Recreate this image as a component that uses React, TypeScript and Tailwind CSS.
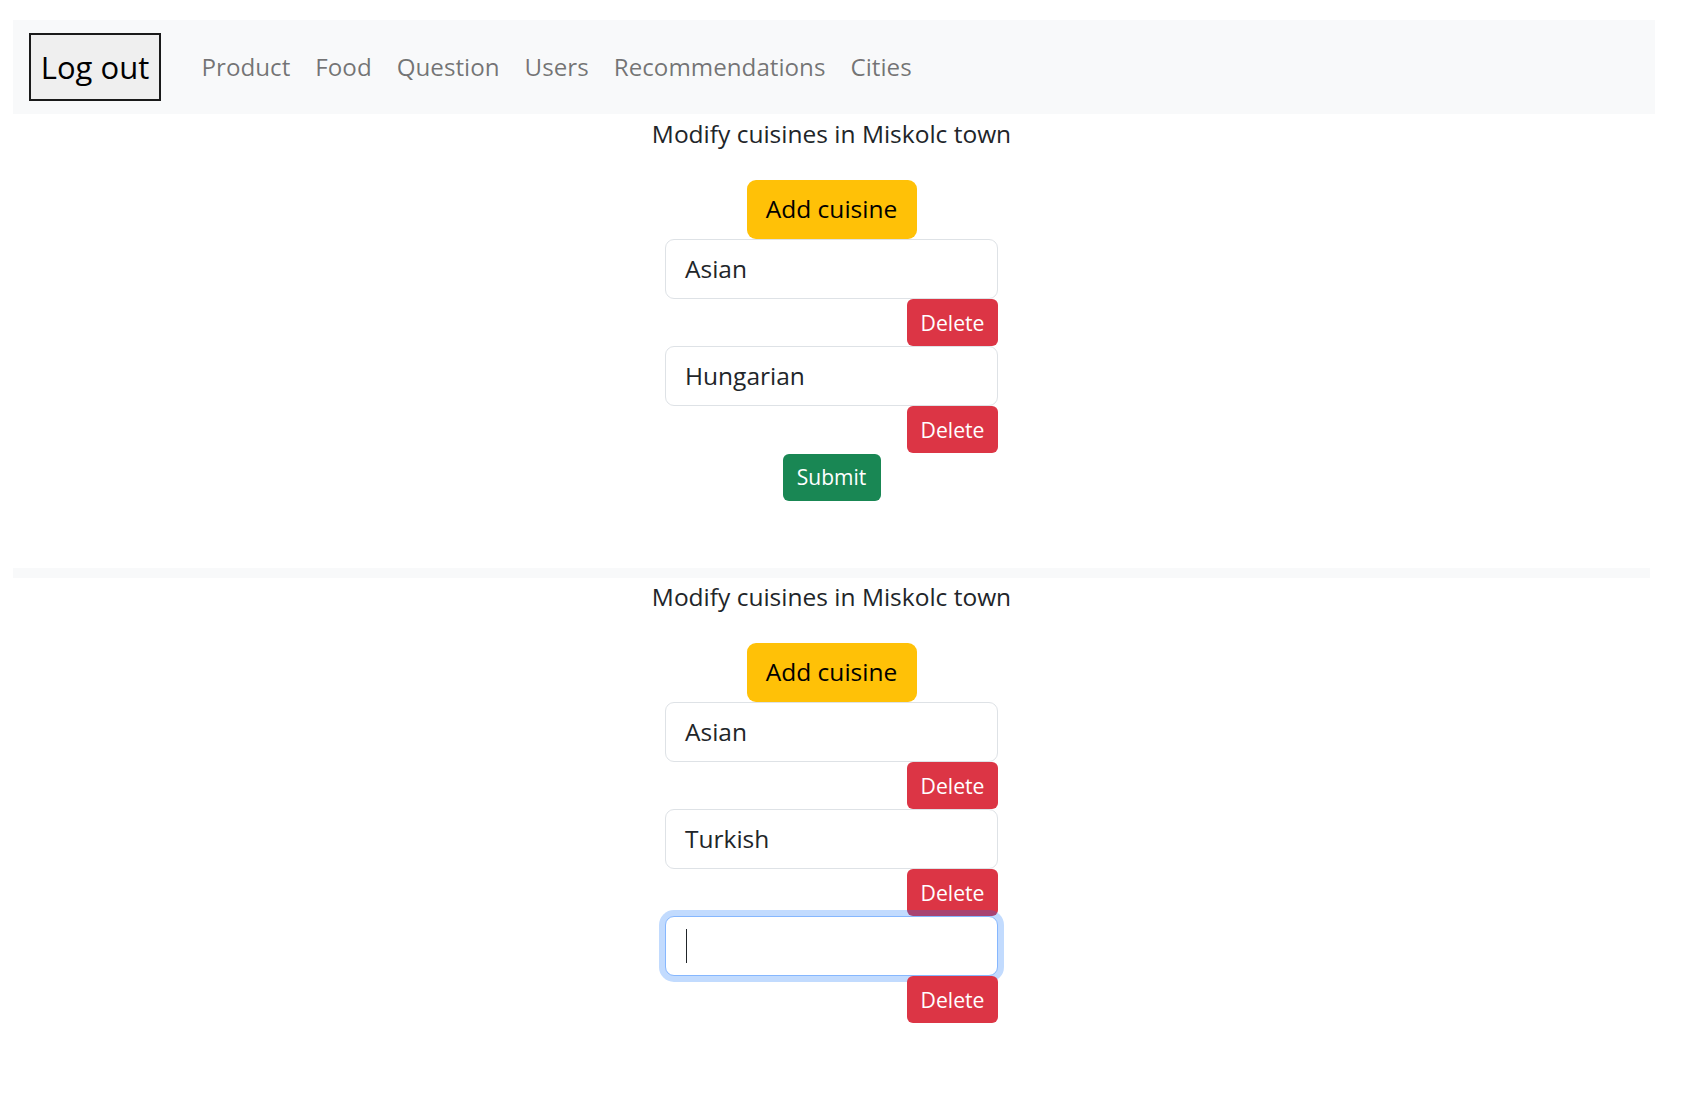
import React from "react";

const font = { fontFamily: "'Segoe UI', 'Open Sans', 'Noto Sans', sans-serif" };

function Item({ value, focused }: { value: string; focused?: boolean }) {
  return (
    <>
      {focused ? (
        <div className="w-full h-[60px] rounded-[9px] border border-[#86b7fe] bg-white shadow-[0_0_0_6px_rgba(13,110,253,0.25)] flex items-center pl-[20px]">
          <div className="w-[1px] h-[34px] bg-[#212529]" />
        </div>
      ) : (
        <div className="w-full h-[60px] rounded-[9px] border border-[#dee2e6] bg-white flex items-center pl-[19px] text-[24.5px] text-[#212529]">
          {value}
        </div>
      )}
      <button className="self-end w-[91px] h-[47px] rounded-[6px] bg-[#dc3545] text-white text-[21.2px] leading-none">
        Delete
      </button>
    </>
  );
}

function Block({ items, submit, focusLast }: { items: string[]; submit?: boolean; focusLast?: boolean }) {
  return (
    <div className="flex flex-col items-center">
      <div className="h-[36px] leading-[36px] text-[24.5px] text-[#212529]">Modify cuisines in Miskolc town</div>
      <div className="mt-[28px] w-[333px] flex flex-col items-center">
        <button className="w-[170px] h-[59px] rounded-[9px] bg-[#ffc107] text-black text-[24.5px] leading-none">
          Add cuisine
        </button>
        {items.map((v, i) => (
          <Item key={i} value={v} />
        ))}
        {focusLast && <Item value="" focused />}
        {submit && (
          <button className="mt-[1px] w-[98px] h-[47px] rounded-[6px] bg-[#198754] text-white text-[21px] leading-none">
            Submit
          </button>
        )}
      </div>
    </div>
  );
}

export default function App() {
  const links = ["Product", "Food", "Question", "Users", "Recommendations", "Cities"];
  return (
    <div className="min-h-screen bg-white" style={font}>
      <div className="pt-[20px] pl-[13px]">
        <nav className="w-[1642px] h-[94px] bg-[#f8f9fa] flex items-center pl-[16px]">
          <button className="w-[132px] h-[68px] border-2 border-[#1a1a1a] bg-[#efefef] text-[31px] leading-none text-black">
            Log out
          </button>
          <div className="ml-[28px] flex items-center text-[24.2px] text-[rgba(0,0,0,0.55)]">
            {links.map((l) => (
              <a key={l} className="px-[12.5px] leading-[36px]">
                {l}
              </a>
            ))}
          </div>
        </nav>
        <div className="w-[1637px] mt-[2px]">
          <Block items={["Asian", "Hungarian"]} submit />
        </div>
        <div className="mt-[67px] w-[1637px] h-[10px] bg-[#f8f9fa]" />
        <div className="w-[1637px] mt-[1px]">
          <Block items={["Asian", "Turkish"]} focusLast />
        </div>
      </div>
    </div>
  );
}
